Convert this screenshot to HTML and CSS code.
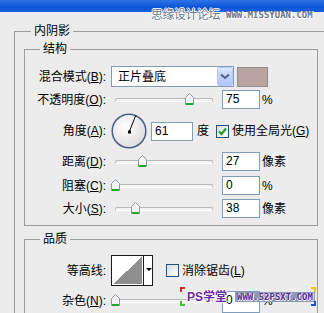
FILE: index.html
```html
<!DOCTYPE html>
<html lang="zh-CN">
<head>
    <meta charset="UTF-8">
    <title>内阴影</title>
    <link rel="stylesheet" href="styles.css">
</head>
<body>
    <div class="titlebar"></div>

    <div class="outer">
        <div class="group-title outer-title">内阴影</div>

        <div class="group">
            <div class="group-title">结构</div>
            <div class="rows">
                <div class="row row-blend">
                    <div class="lbl">混合模式(<u>B</u>):</div>
                    <div class="select">
                        <span>正片叠底</span>
                        <div class="select-btn">
                            <svg width="10" height="7" viewBox="0 0 10 7"><path d="M1 1.5 L5 5 L9 1.5" fill="none" stroke="#4d6185" stroke-width="2"/></svg>
                        </div>
                    </div>
                    <div class="swatch"></div>
                </div>

                <div class="row row-slider gap3">
                    <div class="lbl">不透明度(<u>O</u>):</div>
                    <div class="slider">
                        <div class="track"></div>
                        <svg class="thumb" style="left: 74px" width="9" height="12" viewBox="0 0 9 12"><path d="M0.5 4.5 L4.5 0.5 L8.5 4.5 V11.5 H0.5 Z" fill="#f4f4f4" stroke="#8d9aa6"/><rect x="1" y="10" width="7" height="2" fill="#21a828"/></svg>
                    </div>
                    <div class="field">75</div>
                    <div class="unit">%</div>
                </div>

                <div class="row row-angle">
                    <div class="lbl">角度(<u>A</u>):</div>
                    <svg class="dial" width="36" height="36" viewBox="0 0 36 36">
                        <defs>
                            <radialGradient id="dialFill" cx="40%" cy="35%" r="70%">
                                <stop offset="0" stop-color="#ffffff"/>
                                <stop offset="1" stop-color="#dcdcdc"/>
                            </radialGradient>
                        </defs>
                        <circle cx="18" cy="18" r="16.8" fill="url(#dialFill)" stroke="#4c5f86" stroke-width="1.5"/>
                        <line x1="18.3" y1="18.7" x2="24.7" y2="2.5" stroke="#000" stroke-width="1"/>
                        <rect x="17" y="17.5" width="3" height="3" fill="#000"/>
                    </svg>
                    <div class="field field-angle">61</div>
                    <div class="unit deg">度</div>
                    <div class="checkbox checked">
                        <svg width="11" height="11" viewBox="0 0 11 11"><path d="M2 5.5 L4.5 8 L9 2.5" fill="none" stroke="#21a121" stroke-width="2.2"/></svg>
                    </div>
                    <div class="check-label">使用全局光(<u>G</u>)</div>
                </div>

                <div class="row row-slider gap3">
                    <div class="lbl">距离(<u>D</u>):</div>
                    <div class="slider">
                        <div class="track"></div>
                        <svg class="thumb" style="left: 27px" width="9" height="12" viewBox="0 0 9 12"><path d="M0.5 4.5 L4.5 0.5 L8.5 4.5 V11.5 H0.5 Z" fill="#f4f4f4" stroke="#8d9aa6"/><rect x="1" y="10" width="7" height="2" fill="#21a828"/></svg>
                    </div>
                    <div class="field">27</div>
                    <div class="unit">像素</div>
                </div>

                <div class="row row-slider gap5">
                    <div class="lbl">阻塞(<u>C</u>):</div>
                    <div class="slider">
                        <div class="track"></div>
                        <svg class="thumb" style="left: 0px" width="9" height="12" viewBox="0 0 9 12"><path d="M0.5 4.5 L4.5 0.5 L8.5 4.5 V11.5 H0.5 Z" fill="#f4f4f4" stroke="#8d9aa6"/><rect x="1" y="10" width="7" height="2" fill="#21a828"/></svg>
                    </div>
                    <div class="field">0</div>
                    <div class="unit">%</div>
                </div>

                <div class="row row-slider gap4">
                    <div class="lbl">大小(<u>S</u>):</div>
                    <div class="slider">
                        <div class="track"></div>
                        <svg class="thumb" style="left: 20px" width="9" height="12" viewBox="0 0 9 12"><path d="M0.5 4.5 L4.5 0.5 L8.5 4.5 V11.5 H0.5 Z" fill="#f4f4f4" stroke="#8d9aa6"/><rect x="1" y="10" width="7" height="2" fill="#21a828"/></svg>
                    </div>
                    <div class="field">38</div>
                    <div class="unit">像素</div>
                </div>
            </div>
        </div>

        <div class="group group-quality">
            <div class="group-title">品质</div>
            <div class="rows rows-quality">
                <div class="row row-contour">
                    <div class="lbl">等高线:</div>
                    <div class="contour">
                        <div class="contour-curve"></div>
                        <div class="contour-arrow"></div>
                    </div>
                    <div class="checkbox aa"></div>
                    <div class="check-label">消除锯齿(<u>L</u>)</div>
                </div>

                <div class="row row-slider gap5">
                    <div class="lbl">杂色(<u>N</u>):</div>
                    <div class="slider">
                        <div class="track"></div>
                        <svg class="thumb" style="left: 0px" width="9" height="12" viewBox="0 0 9 12"><path d="M0.5 4.5 L4.5 0.5 L8.5 4.5 V11.5 H0.5 Z" fill="#f4f4f4" stroke="#8d9aa6"/><rect x="1" y="10" width="7" height="2" fill="#21a828"/></svg>
                    </div>
                    <div class="field field-cut">0</div>
                    <div class="unit">%</div>
                </div>
            </div>
        </div>
    </div>

    <!-- watermarks over the screenshot -->
    <div class="mark-top">
        <span class="mark-cn">思缘设计论坛</span>
        <span class="mark-url">WWW.MISSYUAN.COM</span>
    </div>

    <div class="mark-bottom">
        <i class="corner tl"></i><i class="corner tr"></i><i class="corner bl"></i><i class="corner br"></i>
        <span class="mark-ps">PS学堂</span>
        <span class="mark-url2">WWW.52PSXT.COM</span>
    </div>
</body>
</html>
```

FILE: styles.css
```css
body {
    margin: 0;
    width: 324px;
    height: 313px;
    overflow: hidden;
    position: relative;
    background: #ececec;
    color: #000;
    font-family: "Liberation Sans", "Noto Sans CJK SC", sans-serif;
    font-size: 12px;
    line-height: 16px;
}

.titlebar {
    height: 12px;
    background: linear-gradient(#2f74e6, #0c54d6 60%, #1a62e2);
}

.outer {
    margin: 19px 0 0 14px;
    width: 310px;
    height: 282px;
    border: 1px solid #9c9c9c;
    border-right: none;
    border-bottom: none;
    box-sizing: border-box;
}

.group-title {
    width: fit-content;
    height: 16px;
    line-height: 16px;
    margin: -9px 0 0 15px;
    padding: 0 3px;
    background: #ececec;
}

.outer-title {
    margin-left: 16px;
}

.group {
    margin: 10px 0 0 9px;
    width: 294px;
    border: 1px solid #9c9c9c;
    box-sizing: border-box;
    padding-bottom: 7px;
}

.group-quality {
    margin-top: 13px;
    height: 74px;
    padding-bottom: 0;
    border-bottom: none;
}

.rows {
    margin-top: 9px;
}

.rows-quality {
    margin-top: 8px;
}

.row {
    display: flex;
    align-items: center;
}

.lbl {
    flex: none;
    width: 81px;
    margin-right: 5px;
    text-align: right;
    white-space: nowrap;
}

u {
    text-decoration: underline;
    text-underline-offset: 1px;
}

.row-blend {
    height: 21px;
}

.select {
    position: relative;
    display: flex;
    align-items: center;
    width: 123px;
    height: 21px;
    box-sizing: border-box;
    border: 1px solid #7f9db9;
    background: #fff;
    padding-left: 6px;
}

.select-btn {
    position: absolute;
    right: 0;
    top: 0;
    width: 16px;
    height: 19px;
    box-sizing: border-box;
    border: 1px solid #b7c9f5;
    border-radius: 2px;
    background: linear-gradient(#dce6fd, #c1d3fb 50%, #b1c6f6);
    display: flex;
    align-items: center;
    justify-content: center;
}

.swatch {
    margin-left: 3px;
    width: 31px;
    height: 20px;
    box-sizing: border-box;
    border: 1px solid #8e8e8e;
    background: #bba3a2;
}

.row-slider {
    height: 19px;
}

.gap3 { margin-top: 3px; }
.gap4 { margin-top: 4px; }
.gap5 { margin-top: 5px; }

.slider {
    position: relative;
    flex: none;
    width: 106px;
    height: 19px;
    margin-right: 5px;
    display: flex;
    align-items: center;
}

.track {
    flex: 1;
    height: 4px;
    margin: 1px 4px 0;
    box-sizing: border-box;
    border: 1px solid #b9b9b9;
    border-bottom-color: #fff;
    border-radius: 2px;
    background: #f3f3f3;
}

.thumb {
    position: absolute;
    top: 3px;
}

.field {
    flex: none;
    width: 38px;
    height: 19px;
    box-sizing: border-box;
    border: 1px solid #7f9db9;
    background: #fff;
    padding-left: 3px;
    line-height: 17px;
}

.field-cut {
    height: 22px;
    align-self: flex-start;
}

.unit {
    margin-left: 2px;
}

.row-angle {
    margin-top: 4px;
    height: 36px;
}

.dial {
    flex: none;
    margin-right: 4px;
}

.field-angle {
    width: 42px;
}

.deg {
    margin-left: 4px;
}

.checkbox {
    flex: none;
    width: 13px;
    height: 13px;
    box-sizing: border-box;
    border: 1px solid #1c5180;
    background: linear-gradient(135deg, #dcdcd7, #fff);
    display: flex;
    align-items: center;
    justify-content: center;
    margin-left: 7px;
}

.check-label {
    margin-left: 3px;
    white-space: nowrap;
}

.row-contour {
    height: 31px;
}

.contour {
    flex: none;
    display: flex;
    width: 42px;
    height: 31px;
    box-sizing: border-box;
    border: 1px solid #1a1a1a;
    background: #fff;
}

.contour-curve {
    width: 29px;
    margin: 1px;
    background: linear-gradient(to top left, #8e8e8e 50%, #fff 50%);
}

.contour-arrow {
    position: relative;
    flex: 1;
    border-left: 1px solid #1a1a1a;
}

.contour-arrow::after {
    content: "";
    position: absolute;
    left: 2px;
    top: 12px;
    border-left: 3px solid transparent;
    border-right: 3px solid transparent;
    border-top: 3px solid #000;
}

.aa {
    margin-left: 13px;
}

/* watermarks */
.mark-top {
    position: absolute;
    left: 151px;
    top: 7px;
    display: flex;
    align-items: center;
    white-space: nowrap;
}

.mark-cn {
    font-size: 12px;
    letter-spacing: -0.5px;
    color: #6f7a8e;
    text-shadow: 1px 0 #fff, -1px 0 #fff, 0 1px #fff, 0 -1px #fff;
}

.mark-url {
    margin-left: 6px;
    font-family: "DejaVu Sans Mono", monospace;
    font-size: 9px;
    font-weight: bold;
    color: #6f7785;
    text-shadow: 1px 0 #fff, 0 1px #fff;
}

.mark-bottom {
    position: absolute;
    left: 180px;
    top: 287px;
    width: 136px;
    height: 19px;
    display: flex;
    align-items: center;
    white-space: nowrap;
}

.corner {
    position: absolute;
    width: 3px;
    height: 3px;
}

.corner.tl { left: 0; top: 0; border-left: 2px solid #e8201a; border-top: 2px solid #e8201a; }
.corner.tr { right: 0; top: 0; border-right: 2px solid #f0c400; border-top: 2px solid #f0c400; }
.corner.bl { left: 0; bottom: 0; border-left: 2px solid #3cc83c; border-bottom: 2px solid #3cc83c; }
.corner.br { right: 0; bottom: 0; border-right: 2px solid #1d4fd8; border-bottom: 2px solid #1d4fd8; }

.mark-ps {
    margin-left: 7px;
    font-size: 12px;
    font-weight: bold;
    color: #6a2aa6;
    text-shadow: 1px 0 #fff, -1px 0 #fff, 0 1px #fff, 0 -1px #fff;
}

.mark-url2 {
    margin-left: 8px;
    padding: 0 2px;
    height: 10px;
    line-height: 10px;
    background: #8e9ab4;
    font-family: "DejaVu Sans Mono", monospace;
    font-size: 9px;
    font-weight: bold;
    color: #5a2a9a;
    text-shadow: 1px 0 #fff, 0 1px #fff;
}
```
